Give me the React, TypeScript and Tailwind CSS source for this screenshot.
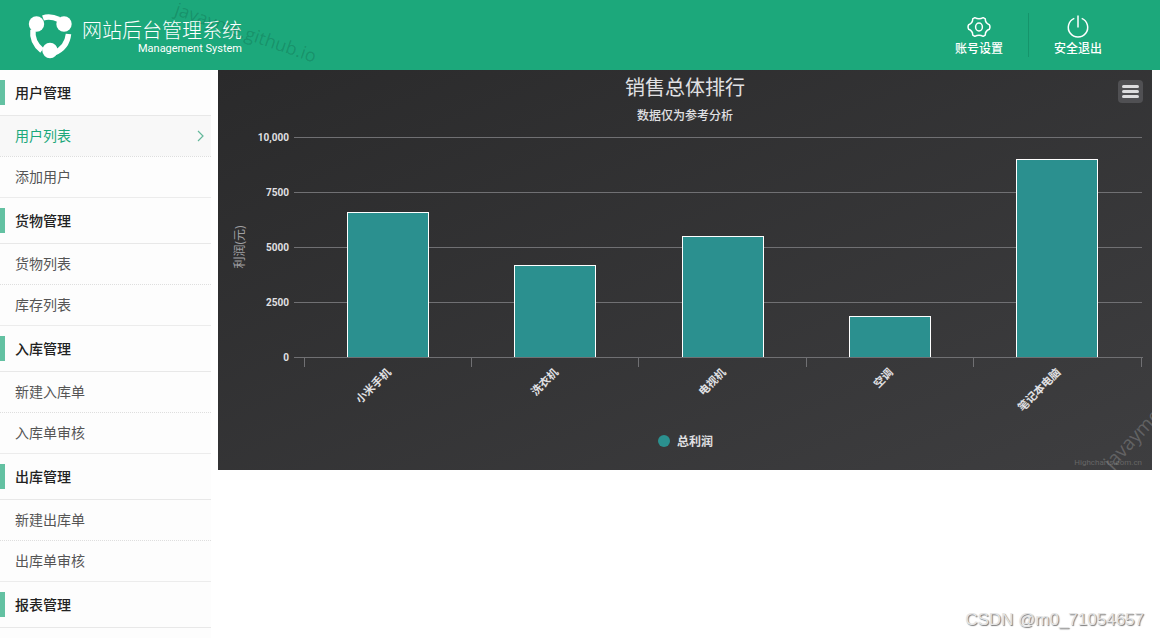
import { useState } from 'react'

interface MenuSection {
  title: string
  items: string[]
}

const sections: MenuSection[] = [
  { title: '用户管理', items: ['用户列表', '添加用户'] },
  { title: '货物管理', items: ['货物列表', '库存列表'] },
  { title: '入库管理', items: ['新建入库单', '入库单审核'] },
  { title: '出库管理', items: ['新建出库单', '出库单审核'] },
  { title: '报表管理', items: [] },
]

const profits = [
  { name: '小米手机', value: 6600 },
  { name: '洗衣机', value: 4200 },
  { name: '电视机', value: 5500 },
  { name: '空调', value: 1860 },
  { name: '笔记本电脑', value: 9000 },
]

const ticks = [
  { value: 0, label: '0' },
  { value: 2500, label: '2500' },
  { value: 5000, label: '5000' },
  { value: 7500, label: '7500' },
  { value: 10000, label: '10,000' },
]

// plot area inside the 934x400 chart
const PLOT = { left: 86, right: 923, bottom: 287, height: 220 }
const MAX = 10000
const BAR_WIDTH = 81

function Logo() {
  return (
    <svg width="44" height="46" viewBox="0 0 44 46" className="shrink-0">
      <g fill="none" stroke="#fff" strokeWidth="5.500">
        <path d="M15 4 Q22 1.500 31 5.500" />
        <path d="M5 16 Q3.500 28 14 36.500" />
        <path d="M40.500 20 Q39 34 26 39" />
      </g>
      <g fill="#fff">
        <circle cx="8.500" cy="10" r="7.700" />
        <circle cx="36" cy="10" r="7.700" />
        <circle cx="22" cy="36.500" r="7.700" />
      </g>
    </svg>
  )
}

function GearIcon() {
  return (
    <svg width="24" height="24" viewBox="0 0 24 24" fill="none" stroke="#fff" strokeWidth="1.500" strokeLinejoin="round">
      <path d="M7.800 2.700 Q12 5 16.200 2.700 L18.300 3.900 Q18.100 8 22.300 9.700 Q23.600 12 22.300 14.300 Q18.100 16 18.300 20.100 L16.200 21.300 Q12 19 7.800 21.300 L5.700 20.100 Q5.900 16 1.700 14.300 Q0.400 12 1.700 9.700 Q5.900 8 5.700 3.900 Z" />
      <ellipse cx="12" cy="12" rx="3.400" ry="4" />
    </svg>
  )
}

function PowerIcon() {
  return (
    <svg width="24" height="24" viewBox="0 0 24 24" fill="none" stroke="#fff" strokeWidth="1.500">
      <path d="M8.300 3.400 A9.700 9.700 0 1 0 15.700 3.400" />
      <path d="M12 0.500 V12.500" />
    </svg>
  )
}

function Header() {
  return (
    <header className="relative flex h-[70px] items-center justify-between overflow-hidden bg-[#1ca87b] pr-[33px] pl-7 text-white">
      <div className="flex items-center gap-[10px] pt-[3px]">
        <Logo />
        <div className="text-right">
          <h1 className="text-[20px] leading-6 font-light">网站后台管理系统</h1>
          <p className="font-['Roboto',sans-serif] text-[11px] leading-3">Management System</p>
        </div>
      </div>
      <nav className="flex items-center">
        <button type="button" className="flex w-[98px] flex-col items-center pt-1 text-xs font-medium">
          <GearIcon />
          <span className="leading-5">账号设置</span>
        </button>
        <span className="h-11 w-px bg-[#15946b]" />
        <button type="button" className="flex w-[98px] flex-col items-center pt-1 text-xs font-medium">
          <PowerIcon />
          <span className="leading-5">安全退出</span>
        </button>
      </nav>
      <span className="pointer-events-none absolute top-5 left-[172px] rotate-[19deg] text-[18px] leading-6 text-black/15">
        javayme.github.io
      </span>
    </header>
  )
}

function Sidebar() {
  const [active, setActive] = useState('用户列表')

  return (
    <aside className="w-[211px] shrink-0 bg-[#fdfdfd]">
      {sections.map((section) => (
        <div key={section.title}>
          <h2 className="flex h-[46px] items-center gap-[10px] border-b border-[#e8e8e8] text-sm font-medium text-[#222]">
            <span className="h-[25px] w-[5px] bg-[#63c1a2]" />
            {section.title}
          </h2>
          <ul>
            {section.items.map((item) => (
              <li key={item} className="border-b border-dotted border-[#dedede] last:border-solid last:border-[#ececec]">
                <a
                  href="#"
                  onClick={() => setActive(item)}
                  className={
                    item === active
                      ? 'flex h-10 items-center justify-between bg-[#f8f8f8] pr-[7px] pl-[15px] text-sm text-[#1ca87b]'
                      : 'flex h-10 items-center pl-[15px] text-sm text-[#555]'
                  }
                >
                  {item}
                  {item === active && (
                    <svg width="7" height="12" viewBox="0 0 7 12" fill="none" stroke="#63b89b" strokeWidth="1.200">
                      <path d="M1 1 L6 6 L1 11" />
                    </svg>
                  )}
                </a>
              </li>
            ))}
          </ul>
        </div>
      ))}
      <div className="h-3" />
    </aside>
  )
}

function ProfitChart() {
  const step = (PLOT.right - PLOT.left) / profits.length
  const y = (value: number) => Math.round(PLOT.bottom - (value / MAX) * PLOT.height) + 0.5

  return (
    <svg viewBox="0 0 934 400" className="block w-full" role="img" aria-label="销售总体排行">
      <defs>
        <linearGradient id="chart-bg" x1="0" y1="0" x2="1" y2="1">
          <stop offset="0" stopColor="#2a2a2b" />
          <stop offset="1" stopColor="#3e3e40" />
        </linearGradient>
      </defs>
      <rect width="934" height="400" fill="url(#chart-bg)" />

      <text x="467" y="25" textAnchor="middle" fontSize="20" fill="#e0e0e3">销售总体排行</text>
      <text x="467" y="50" textAnchor="middle" fontSize="12" fill="#e0e0e3" className="font-medium">数据仅为参考分析</text>

      {ticks.map((tick) => (
        <g key={tick.value}>
          <line x1="76" x2="924" y1={y(tick.value)} y2={y(tick.value)} stroke="#707073" />
          <text
            x="71"
            y={y(tick.value) + 3}
            textAnchor="end"
            fontSize="10"
            fill="#e0e0e3"
            className="font-['Roboto'] font-bold"
          >
            {tick.label}
          </text>
        </g>
      ))}
      <text transform="translate(26 177) rotate(-90)" textAnchor="middle" fontSize="12" fill="#a0a0a3">
        利润(元)
      </text>

      {profits.map((item, i) => {
        const center = PLOT.left + step * (i + 0.5)
        const top = y(item.value)
        return (
          <g key={item.name}>
            <rect
              x={Math.floor(center - BAR_WIDTH / 2) + 0.5}
              y={top}
              width={BAR_WIDTH}
              height={PLOT.bottom + 0.5 - top}
              fill="#2b908f"
              stroke="#fff"
            />
            <text
              transform={`translate(${center + 4} 303) rotate(-45)`}
              textAnchor="end"
              fontSize="11"
              fill="#e0e0e3"
              className="font-bold"
            >
              {item.name}
            </text>
          </g>
        )
      })}

      <line x1="76" x2="925" y1="287.5" y2="287.5" stroke="#707073" />
      {[...profits, null].map((_, i) => {
        const x = Math.floor(PLOT.left + step * i) + 0.5
        return <line key={i} x1={x} x2={x} y1="288" y2="297" stroke="#707073" />
      })}

      <circle cx="446" cy="371" r="6" fill="#2b908f" />
      <text x="459" y="376" fontSize="12" fill="#e0e0e3" className="font-bold">总利润</text>

      <text x="924" y="395" textAnchor="end" fontSize="8" fill="#666" className="font-['Roboto']">
        Highcharts.com.cn
      </text>
      <text transform="translate(894 400) rotate(-47)" fontSize="19" fill="#fff" fillOpacity="0.2">
        javayme.github.io
      </text>
    </svg>
  )
}

export default function App() {
  return (
    <div className="relative h-screen overflow-hidden bg-white font-['Open_Sans','Noto_Sans_CJK_SC',sans-serif]">
      <Header />
      <div className="flex gap-[7px] pr-2">
        <Sidebar />
        <main className="relative min-w-0 flex-1">
          <ProfitChart />
          <button
            type="button"
            aria-label="导出"
            className="absolute top-[10px] right-[9px] flex h-[23px] w-[25px] flex-col items-center justify-center gap-[2px] rounded-sm bg-[#505053]"
          >
            <span className="h-[3px] w-[17px] rounded-sm bg-[#dddddf]" />
            <span className="h-[3px] w-[17px] rounded-sm bg-[#dddddf]" />
            <span className="h-[3px] w-[17px] rounded-sm bg-[#dddddf]" />
          </button>
        </main>
      </div>
      <span className="absolute right-4 bottom-[6px] font-['Liberation_Sans',sans-serif] text-[17px] leading-6 text-[#e4e4e4] [text-shadow:1px_1px_1px_#777]">
        CSDN @m0_71054657
      </span>
    </div>
  )
}
